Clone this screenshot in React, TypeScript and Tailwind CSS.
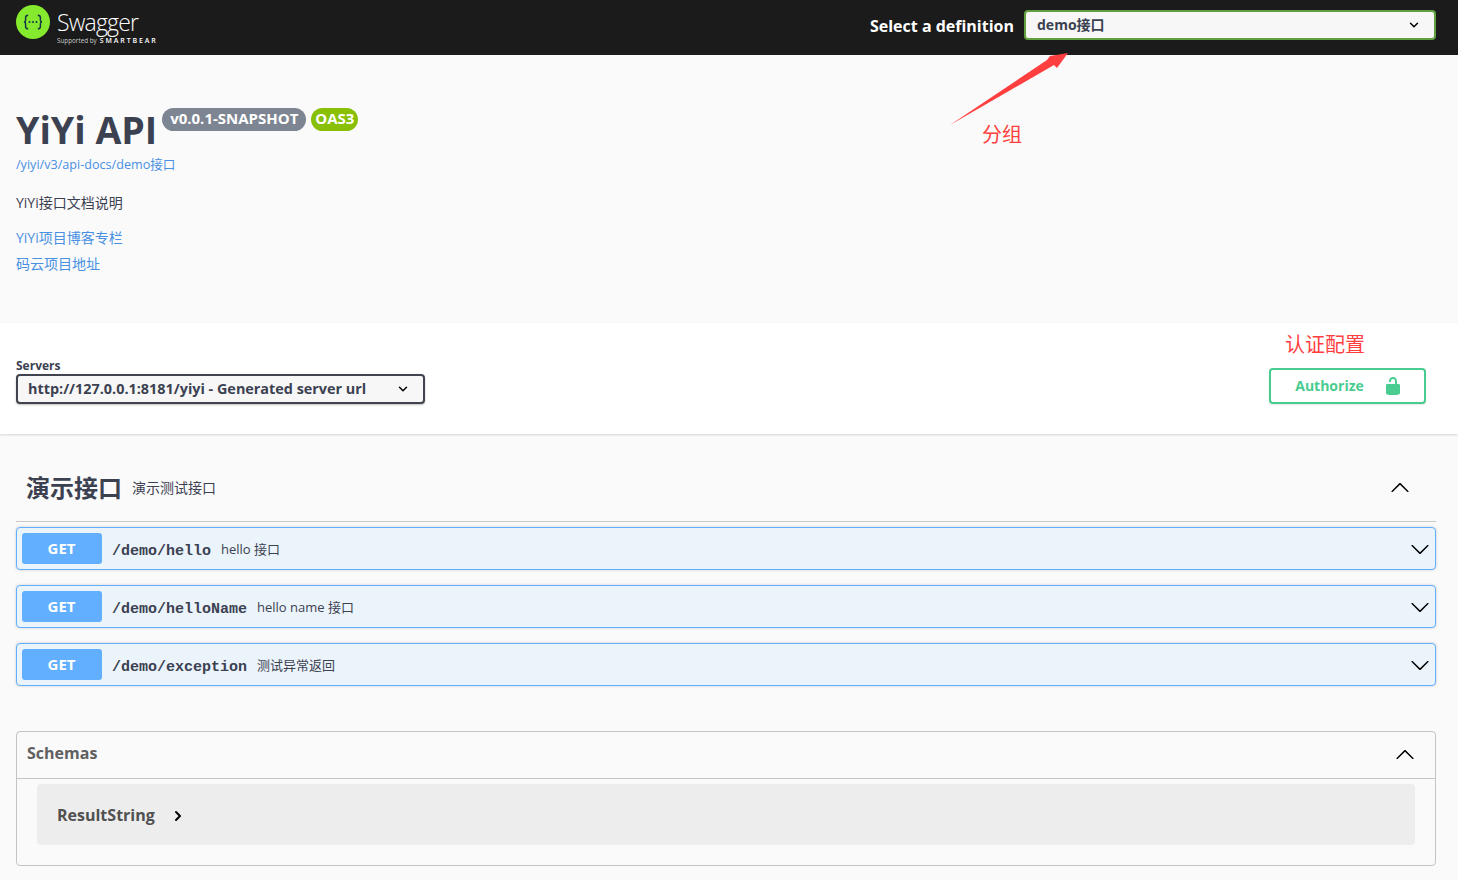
import { ChevronDown, ChevronRight } from "lucide-react";

const sans = "font-['Open_Sans','Noto_Sans_CJK_SC',sans-serif]";

const operations = [
  { path: "/demo/hello", summary: "hello 接口" },
  { path: "/demo/helloName", summary: "hello name 接口" },
  { path: "/demo/exception", summary: "测试异常返回" },
];

function ArrowIcon({ up, className }: { up?: boolean; className?: string }) {
  return (
    <svg width="20" height="20" viewBox="0 0 20 20" fill="#000" className={`${up ? "rotate-180" : ""} ${className ?? ""}`}>
      <path d="M17.418 6.109c.272-.268.709-.268.979 0s.271.701 0 .969l-7.908 7.83c-.27.268-.707.268-.979 0l-7.908-7.83c-.27-.268-.27-.701 0-.969.271-.268.709-.268.979 0L10 13.25l7.418-7.141z" />
    </svg>
  );
}

function SwaggerLogo() {
  return (
    <div className="mt-[5px] flex items-start gap-[7px] self-start">
      <svg width="34" height="34" viewBox="0 0 34 34">
        <circle cx="17" cy="17" r="17" fill="#85ea2d" />
        <path d="M12.200 10.200c-2 0-2.600.8-2.600 2.400v2.700c0 1-.5 1.600-1.600 1.700 1.100.100 1.600.700 1.600 1.700v2.700c0 1.600.6 2.400 2.600 2.400" fill="none" stroke="#173647" strokeWidth="1.500" />
        <path d="M21.800 10.200c2 0 2.600.8 2.600 2.400v2.700c0 1 .5 1.600 1.600 1.700-1.100.100-1.600.700-1.600 1.700v2.700c0 1.600-.6 2.400-2.600 2.400" fill="none" stroke="#173647" strokeWidth="1.500" />
        <circle cx="13.500" cy="17" r="1" fill="#173647" />
        <circle cx="17" cy="17" r="1" fill="#173647" />
        <circle cx="20.500" cy="17" r="1" fill="#173647" />
      </svg>
      <div className="flex flex-col pt-[4px] text-white">
        <span className="font-['Open_Sans',sans-serif] text-[23px] leading-[26px] font-light tracking-[-0.8px]">Swagger</span>
        <span className="mt-[2px] flex items-baseline gap-[3px] font-['Open_Sans',sans-serif] leading-[8px]">
          <span className="text-[6.3px] text-[#cccccc]">Supported by</span>
          <span className="text-[7px] font-semibold tracking-[1.9px]">SMARTBEAR</span>
        </span>
      </div>
    </div>
  );
}

function OperationRow({ path, summary }: { path: string; summary: string }) {
  return (
    <div className="flex h-[43px] items-center rounded border border-[#61affe] bg-[#ebf3fb] pl-[5px] pr-[5px] shadow-[0_0_3px_rgba(0,0,0,0.19)]">
      <div className="flex h-[31px] w-[80px] items-center justify-center rounded-[3px] bg-[#61affe] pr-[1px] text-[15px] font-bold text-white">GET</div>
      <span className="ml-[10px] mt-[7px] font-['Liberation_Mono',monospace] text-[15px] font-bold text-[#3b4151]">{path}</span>
      <span className="ml-[10px] mt-[2px] text-[13px] text-[#3b4151]">{summary}</span>
      <ArrowIcon className="ml-auto" />
    </div>
  );
}

export default function App() {
  return (
    <div className={`${sans} relative h-[880px] overflow-hidden bg-[#fafafa] text-[#3b4151]`}>
      <header className="flex h-[55px] items-start justify-between bg-[#1b1b1b] pl-4 pr-[22px]">
        <SwaggerLogo />
        <div className="mt-[10px] flex items-center gap-[10px]">
          <span className="mt-[2px] text-base font-bold text-white">Select a definition</span>
          <div className="flex h-[30px] w-[412px] items-center justify-between rounded border-2 border-[#62a03f] bg-[#f7f7f7] pl-[11px] pr-[13px] text-sm font-bold">
            <span>demo接口</span>
            <ChevronDown className="text-black" size={14} strokeWidth={2.5} />
          </div>
        </div>
      </header>

      <section className="h-[268px] px-4 pt-[50px]">
        <div className="flex items-start gap-[5px]">
          <h1 className="text-[37.500px] leading-[50px] font-bold">YiYi API</h1>
          <span className="mt-[3px] flex h-[23px] w-[144px] items-center justify-center rounded-full bg-[#7d8492] pb-[2px] text-[15px] font-bold text-white">v0.0.1-SNAPSHOT</span>
          <span className="mt-[3px] flex h-[23px] w-[47px] items-center justify-center rounded-full bg-[#89bf04] pb-[2px] text-[15px] font-bold text-white">OAS3</span>
        </div>
        <div className="mt-[1px] text-[12.600px] leading-[18px] text-[#4990e2]">/yiyi/v3/api-docs/demo接口</div>
        <p className="mt-[20px] text-sm leading-[18px]">YiYi接口文档说明</p>
        <div className="mt-[17px] text-sm leading-[18px] text-[#4990e2]">YiYi项目博客专栏</div>
        <div className="mt-[8px] text-sm leading-[18px] text-[#4990e2]">码云项目地址</div>
      </section>

      <section className="flex h-[111px] items-start justify-between bg-white pl-4 pr-[32px] pt-[35px] shadow-[0_1px_2px_rgba(0,0,0,0.15)]">
        <div>
          <div className="text-xs leading-[16px] font-bold">Servers</div>
          <div className="flex h-[30px] w-[409px] items-center justify-between rounded border-2 border-[#41444e] bg-[#f7f7f7] pl-[10px] pr-[13px] text-[14.400px] font-bold shadow-[0_1px_2px_rgba(0,0,0,0.25)]">
            <span>http://127.0.0.1:8181/yiyi - Generated server url</span>
            <ChevronDown className="text-black" size={14} strokeWidth={2.5} />
          </div>
        </div>
        <div className="mt-[10px] flex h-[36px] w-[157px] items-center justify-center gap-[19px] rounded border-2 border-[#49cc90] bg-white pl-[3px] text-sm font-bold text-[#49cc90] shadow-[0_1px_2px_rgba(0,0,0,0.1)]">
          <span>Authorize</span>
          <svg width="20" height="20" viewBox="0 0 20 20" fill="#49cc90">
            <path d="M15.800 8H14V5.600C14 2.703 12.665 1 10 1 7.334 1 6 2.703 6 5.600V6h2v-.801C8 3.754 8.797 3 10 3c1.203 0 2 .754 2 2.199V8H4c-.553 0-1 .646-1 1.199V17c0 .549.428 1.139.951 1.307l1.197.387C5.672 18.861 6.550 19 7.100 19h5.800c.549 0 1.428-.139 1.951-.307l1.196-.387c.524-.167.953-.757.953-1.306V9.199C17 8.646 16.352 8 15.800 8z" />
          </svg>
        </div>
      </section>

      <section className="pl-4 pr-[22px] pt-[21px]">
        <div className="flex h-[67px] items-center border-b border-[#c8c8c8] pl-[10px] pr-[26px]">
          <h2 className="text-2xl font-bold">演示接口</h2>
          <span className="ml-[10px] text-sm">演示测试接口</span>
          <ArrowIcon up className="ml-auto" />
        </div>
        <div className="mt-[5px] flex flex-col gap-[15px]">
          {operations.map((op) => (
            <OperationRow key={op.path} path={op.path} summary={op.summary} />
          ))}
        </div>
      </section>

      <section className="ml-4 mr-[22px] mt-[45px] h-[135px] rounded border border-[#c4c4c4]">
        <div className="flex h-[47px] items-center justify-between border-b border-[#c4c4c4] pb-[4px] pl-[10px] pr-[20px] text-base font-bold text-[#606060]">
          <span>Schemas</span>
          <ArrowIcon up className="mt-[4px]" />
        </div>
        <div className="mx-5 mt-[5px] flex h-[61px] items-center rounded bg-[#ededed] pl-5 text-base font-bold text-[#505050]">
          <span>ResultString</span>
          <ChevronRight className="ml-[15px] mt-[2px] text-black" size={16} strokeWidth={3} />
        </div>
      </section>

      {/* annotations drawn on top of the screenshot */}
      <svg className="absolute left-[940px] top-[45px]" width="140" height="90" viewBox="940 45 140 90">
        <polygon points="950,125 1047,60 1050,56 1068,53 1057,68 1054,65" fill="#ff3f3f" />
      </svg>
      <span className="absolute left-[982px] top-[121px] text-xl leading-[28px] text-[#ff3f3f]">分组</span>
      <span className="absolute left-[1285px] top-[331px] text-xl leading-[28px] text-[#ff3f3f]">认证配置</span>
    </div>
  );
}
